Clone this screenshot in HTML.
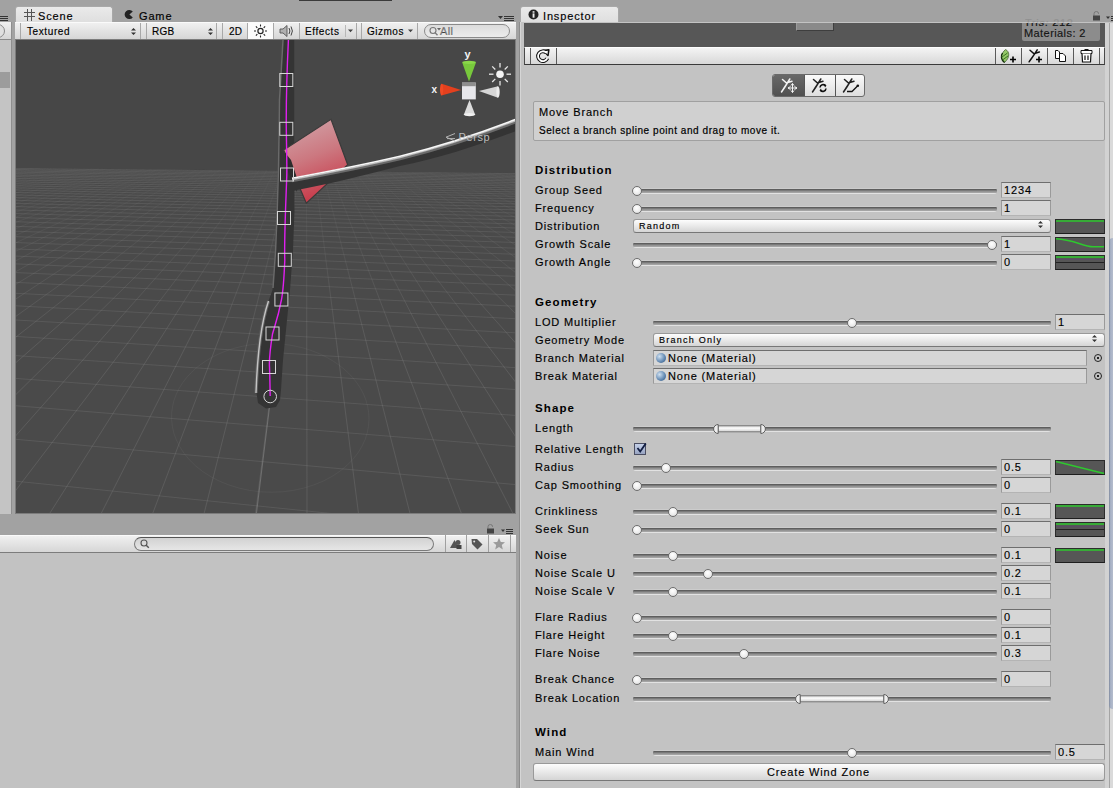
<!DOCTYPE html>
<html><head><meta charset="utf-8"><style>
*{box-sizing:border-box}
html,body{margin:0;padding:0;width:1113px;height:788px;overflow:hidden;background:#a2a2a2;font-family:"Liberation Sans", sans-serif;}
.a{position:absolute}
.t{position:absolute;font-size:11px;line-height:12px;letter-spacing:0.85px;color:#000;white-space:nowrap;-webkit-text-stroke:0.15px #000}
.s{position:absolute;font-size:10px;line-height:12px;letter-spacing:0.55px;color:#000;white-space:nowrap;-webkit-text-stroke:0.15px #000}
.hd{position:absolute;font-size:11.5px;line-height:12px;font-weight:bold;letter-spacing:1.1px;color:#000;white-space:nowrap}
.tb{position:absolute;background:linear-gradient(#f0f0f0,#d6d6d6);border-bottom:1px solid #7c7c7c;border-top:1px solid #fafafa}
.sep{position:absolute;width:1px;background:#a8a8a8}
.track{position:absolute;height:6px;border-radius:3px;background:linear-gradient(#cccccc 0 1px,#5e5e5e 1px 2px,#7a7a7a 2px 3px,#949494 3px 4px,#a4a4a4 4px 5px,#e2e2e2 5px 6px)}
.thumb{position:absolute;width:10px;height:10px;border-radius:50%;background:radial-gradient(circle at 45% 35%,#ffffff,#ededed 55%,#d0d0d0);border:1px solid #6e6e6e}
.vbox{position:absolute;height:16px;background:#d6d6d6;border:1px solid #9a9a9a;border-top-color:#6e6e6e;border-bottom-color:#b4b4b4}
.curve{position:absolute;height:15px;background:#565656;border:1px solid #2c2c2c;border-bottom-color:#1e1e1e}
.dd{position:absolute;border:1px solid #999;border-bottom-color:#777;border-radius:3px;background:linear-gradient(#fdfdfd,#e9e9e9 50%,#d5d5d5)}
</style></head><body>

<div class="a" style="left:0;top:22px;width:11px;height:492px;background:#c4c4c4"></div>
<div class="a" style="left:0;top:22px;width:11px;height:18px;background:linear-gradient(#f0f0f0,#d6d6d6);border-bottom:1px solid #8a8a8a"></div>
<div class="a" style="left:0;top:72px;width:10px;height:16px;background:#9c9c9c"></div>
<div class="a" style="left:-9px;top:24px;width:14px;height:14px;border-radius:7px;border:1px solid #8a8a8a;background:#e0e0e0"></div>
<div class="a" style="left:11px;top:22px;width:1px;height:492px;background:#8e8e8e"></div>
<div class="a" style="left:0;top:16px;width:8px;height:1px;background:#333"></div><div class="a" style="left:0;top:18px;width:8px;height:1px;background:#333"></div><div class="a" style="left:0;top:20px;width:8px;height:1px;background:#333"></div>
<div class="a" style="left:15px;top:6px;width:98px;height:17px;border-radius:3px 3px 0 0;background:linear-gradient(#eaeaea,#dedede);border:1px solid #a8a8a8;border-bottom:none"></div>
<div class="t" style="left:38px;top:10px">Scene</div>
<div class="t" style="left:139px;top:10px">Game</div>
<div class="tb" style="left:15px;top:22px;width:501px;height:18px"></div>
<div class="sep" style="left:20px;top:23px;height:16px"></div>
<div class="sep" style="left:140px;top:23px;height:16px"></div>
<div class="sep" style="left:146px;top:23px;height:16px"></div>
<div class="sep" style="left:216px;top:23px;height:16px"></div>
<div class="sep" style="left:222px;top:23px;height:16px"></div>
<div class="sep" style="left:247px;top:23px;height:16px"></div>
<div class="sep" style="left:273px;top:23px;height:16px"></div>
<div class="sep" style="left:299px;top:23px;height:16px"></div>
<div class="sep" style="left:356px;top:23px;height:16px"></div>
<div class="sep" style="left:361px;top:23px;height:16px"></div>
<div class="sep" style="left:417px;top:23px;height:16px"></div>
<div class="a" style="left:248px;top:23px;width:25px;height:16px;background:#fbfbfb"></div>
<div class="s" style="left:27px;top:26px;letter-spacing:0.6px">Textured</div>
<div class="s" style="left:152px;top:26px;letter-spacing:0.3px">RGB</div>
<div class="s" style="left:229px;top:26px;letter-spacing:0.2px">2D</div>
<div class="s" style="left:305px;top:26px;letter-spacing:0.6px">Effects</div>
<div class="s" style="left:367px;top:26px;letter-spacing:0.5px">Gizmos</div>
<svg class="a" style="left:130px;top:27px" width="7" height="9"><path d="M1 3.5 L3.5 1 L6 3.5 Z M1 5.5 L3.5 8 L6 5.5 Z" fill="#333"/></svg>
<svg class="a" style="left:207px;top:27px" width="7" height="9"><path d="M1 3.5 L3.5 1 L6 3.5 Z M1 5.5 L3.5 8 L6 5.5 Z" fill="#333"/></svg>
<div class="sep" style="left:345px;top:25px;height:12px;background:#b8b8b8"></div>
<svg class="a" style="left:347px;top:29px" width="7" height="5"><path d="M1 0.5 L6 0.5 L3.5 3.2 Z" fill="#444"/></svg>
<svg class="a" style="left:407px;top:29px" width="7" height="5"><path d="M1 0.5 L6 0.5 L3.5 3.2 Z" fill="#444"/></svg>
<svg class="a" style="left:252px;top:23px" width="17" height="16"><circle cx="8.5" cy="8" r="2.6" fill="none" stroke="#222" stroke-width="1.2"/><g stroke="#222" stroke-width="1.1"><line x1="8.5" y1="1.5" x2="8.5" y2="3.5"/><line x1="8.5" y1="12.5" x2="8.5" y2="14.5"/><line x1="2" y1="8" x2="4" y2="8"/><line x1="13" y1="8" x2="15" y2="8"/><line x1="3.9" y1="3.4" x2="5.3" y2="4.8"/><line x1="11.7" y1="11.2" x2="13.1" y2="12.6"/><line x1="3.9" y1="12.6" x2="5.3" y2="11.2"/><line x1="11.7" y1="4.8" x2="13.1" y2="3.4"/></g></svg>
<svg class="a" style="left:278px;top:23px" width="17" height="16"><path d="M2 6 L5 6 L9 2.5 L9 13.5 L5 10 L2 10 Z" fill="#b0b0b0" stroke="#555" stroke-width="0.9"/><path d="M11 5 Q12.8 8 11 11" stroke="#444" stroke-width="1" fill="none"/><path d="M13 3.5 Q15.8 8 13 12.5" stroke="#444" stroke-width="1" fill="none"/></svg>
<div class="a" style="left:424px;top:24px;width:86px;height:14px;border-radius:7px;border:1px solid #8a8a8a;background:linear-gradient(#dcdcdc,#ececec)"></div>
<svg class="a" style="left:428px;top:25px" width="14" height="12"><circle cx="5" cy="5.5" r="3" fill="none" stroke="#777" stroke-width="1.1"/><line x1="7" y1="7.6" x2="9.5" y2="10.3" stroke="#777" stroke-width="1.3"/><path d="M9 3 L13 3 L11 5.5 Z" fill="#666"/></svg>
<div class="s" style="left:440px;top:24.5px;color:#8a8a8a;font-size:11px;letter-spacing:0.4px">All</div>
<svg class="a" style="left:24px;top:9px" width="11" height="12"><g stroke="#555" stroke-width="1"><line x1="3.5" y1="0" x2="3.5" y2="12"/><line x1="7.5" y1="0" x2="7.5" y2="12"/><line x1="0" y1="3.5" x2="11" y2="3.5"/><line x1="0" y1="7.5" x2="11" y2="7.5"/></g></svg>
<svg class="a" style="left:124px;top:9px" width="11" height="11"><path d="M8.8 2.6 A4.6 4.6 0 1 0 8.8 8.4 L5.4 5.5 Z" fill="#222"/></svg>
<svg class="a" style="left:498px;top:15px" width="18" height="7"><path d="M0 1 L5 1 L2.5 4 Z" fill="#333"/><g stroke="#333" stroke-width="1"><line x1="6" y1="1.5" x2="16" y2="1.5"/><line x1="6" y1="3.5" x2="16" y2="3.5"/><line x1="6" y1="5.5" x2="16" y2="5.5"/></g></svg>
<div class="a" style="left:15px;top:40px;width:501px;height:474px;background:#7c7c7c"></div>
<div class="a" style="left:16px;top:40px;width:499px;height:473px;background:#474747;overflow:hidden">
<svg width="501" height="473" style="position:absolute;left:0;top:0"><defs><linearGradient id="gb" gradientUnits="userSpaceOnUse" x1="0" y1="128" x2="0" y2="300"><stop offset="0" stop-color="#8c8c8c" stop-opacity="0.04"/><stop offset="1" stop-color="#8c8c8c" stop-opacity="0.26"/></linearGradient><clipPath id="fl"><polygon points="0,128 501,133 501,473 0,473"/></clipPath><linearGradient id="fg" x1="0" y1="0" x2="0" y2="1"><stop offset="0" stop-color="#9a9a9a" stop-opacity="0.22"/><stop offset="0.25" stop-color="#9a9a9a" stop-opacity="0.30"/><stop offset="1" stop-color="#9a9a9a" stop-opacity="0.38"/></linearGradient></defs><polygon points="0,128 501,133 501,473 0,473" fill="#4a4a4a"/><path clip-path="url(#fl)" d="M-2.0 441.0L330.2 475.0M-2.0 399.1L503.0 444.9M-2.0 365.6L503.0 406.8M-2.0 338.3L503.0 375.7M-2.0 315.5L503.0 349.8M-2.0 296.3L503.0 327.9M-2.0 279.9L503.0 309.2M-2.0 265.7L503.0 293.0M-2.0 253.2L503.0 278.9M-2.0 242.3L503.0 266.4M-2.0 232.5L503.0 255.3M-2.0 223.8L503.0 245.4M-2.0 216.0L503.0 236.5M-2.0 208.9L503.0 228.4M-2.0 202.5L503.0 221.1M-2.0 196.6L503.0 214.4M-2.0 191.2L503.0 208.3M-2.0 186.3L503.0 202.6M-2.0 181.7L503.0 197.4M-2.0 177.5L503.0 192.6M-2.0 173.5L503.0 188.1M-2.0 169.9L503.0 184.0M-2.0 166.5L503.0 180.1M-2.0 163.3L503.0 176.5M-2.0 160.3L503.0 173.1M-2.0 157.5L503.0 169.9M-2.0 154.9L503.0 166.9M-2.0 152.4L503.0 164.0M-2.0 150.0L503.0 161.4M-2.0 147.8L503.0 158.8M-2.0 145.7L503.0 156.4M-2.0 143.7L503.0 154.2M-2.0 141.8L503.0 152.0M-2.0 140.0L503.0 149.9M-2.0 138.3L503.0 148.0M-2.0 136.6L503.0 146.1M-2.0 135.1L503.0 144.3M-2.0 133.6L503.0 142.6M-2.0 132.1L503.0 141.0M-2.0 130.8L503.0 139.5M-2.0 129.5L503.0 138.0M-2.0 128.2L503.0 136.5M-2.0 127.0L503.0 135.2M-2.0 125.8L503.0 133.8M-2.0 124.7L503.0 132.6M-2.0 123.7L503.0 131.4M-2.0 122.6L503.0 130.2M-2.0 121.6L503.0 129.0M-2.0 120.7L503.0 128.0M16.3 120.0L503.0 126.9M80.8 120.0L503.0 125.9M145.2 120.0L503.0 124.9M209.7 120.0L503.0 123.9M274.2 120.0L503.0 123.0M338.6 120.0L503.0 122.1M403.1 120.0L503.0 121.3M467.6 120.0L503.0 120.4" stroke="#8c8c8c" stroke-opacity="0.24" stroke-width="1" fill="none"/><path clip-path="url(#fl)" d="M-2.0 120.4L0.1 120.0M-2.0 121.6L6.7 120.0M-2.0 122.9L13.3 120.0M-2.0 124.2L19.9 120.0M-2.0 125.6L26.5 120.0M-2.0 127.1L33.1 120.0M-2.0 128.6L39.7 120.0M-2.0 130.3L46.3 120.0M-2.0 132.0L52.9 120.0M-2.0 133.8L59.5 120.0M-2.0 135.8L66.1 120.0M-2.0 137.8L72.7 120.0M-2.0 140.0L79.3 120.0M-2.0 142.3L85.9 120.0M-2.0 144.8L92.5 120.0M-2.0 147.5L99.1 120.0M-2.0 150.3L105.7 120.0M-2.0 153.4L112.3 120.0M-2.0 156.6L118.9 120.0M-2.0 160.2L125.5 120.0M-2.0 164.0L132.1 120.0M-2.0 168.2L138.7 120.0M-2.0 172.8L145.3 120.0M-2.0 177.8L151.9 120.0M-2.0 183.2L158.5 120.0M-2.0 189.3L165.1 120.0M-2.0 196.1L171.7 120.0M-2.0 203.6L178.3 120.0M-2.0 212.1L184.9 120.0M-2.0 221.7L191.5 120.0M-2.0 232.7L198.1 120.0M-2.0 245.4L204.7 120.0M-2.0 260.2L211.3 120.0M-2.0 277.7L217.9 120.0M-2.0 298.6L224.5 120.0M-2.0 324.3L231.1 120.0M-2.0 356.4L237.7 120.0M-2.0 397.7L244.3 120.0M-2.0 452.7L250.9 120.0M32.7 475.0L257.5 120.0M84.4 475.0L264.1 120.0M136.1 475.0L270.7 120.0M187.7 475.0L277.3 120.0M239.4 475.0L283.9 120.0M291.0 475.0L290.5 120.0M342.7 475.0L297.1 120.0M394.4 475.0L303.7 120.0M446.0 475.0L310.3 120.0M497.7 475.0L316.9 120.0M503.0 402.1L323.5 120.0M503.0 346.6L330.1 120.0M503.0 306.8L336.7 120.0M503.0 277.0L343.3 120.0M503.0 253.8L349.9 120.0M503.0 235.3L356.5 120.0M503.0 220.1L363.1 120.0M503.0 207.4L369.7 120.0M503.0 196.7L376.3 120.0M503.0 187.5L382.9 120.0M503.0 179.6L389.5 120.0M503.0 172.6L396.1 120.0M503.0 166.5L402.7 120.0M503.0 161.0L409.3 120.0M503.0 156.1L415.9 120.0M503.0 151.7L422.5 120.0M503.0 147.7L429.1 120.0M503.0 144.1L435.7 120.0M503.0 140.8L442.3 120.0M503.0 137.8L448.9 120.0M503.0 135.0L455.5 120.0M503.0 132.4L462.1 120.0M503.0 130.0L468.7 120.0M503.0 127.8L475.3 120.0M503.0 125.7L481.9 120.0M503.0 123.8L488.5 120.0M503.0 122.0L495.1 120.0M503.0 120.3L501.7 120.0" stroke="url(#gb)" stroke-width="1" fill="none"/></svg>
<svg width="501" height="473" style="position:absolute;left:0;top:0"><g transform="translate(-16,-40)">
<defs>
<linearGradient id="pink" x1="0.1" y1="0" x2="0.4" y2="1"><stop offset="0" stop-color="#d2a6ab"/><stop offset="0.5" stop-color="#cc7880"/><stop offset="1" stop-color="#c83848"/></linearGradient>
<linearGradient id="br" x1="0" y1="0" x2="0" y2="1"><stop offset="0" stop-color="#f4f4f4"/><stop offset="0.25" stop-color="#d8d8d8"/><stop offset="0.45" stop-color="#5a5a5a"/><stop offset="1" stop-color="#303030"/></linearGradient>
</defs>
<path d="M365.9 400.0 L363.5 394.0 L360.5 388.3 L356.9 382.9 L352.9 377.8 L348.5 373.1 L343.6 368.7 L338.5 364.7 L333.0 361.0 L327.3 357.6 L321.4 354.6 L315.2 352.0 L308.9 349.7 L302.5 347.8 L295.9 346.3 L289.3 345.0 L282.6 344.2 L275.9 343.7 L269.1 343.5 L262.4 343.7 L255.7 344.2 L249.0 345.0 L242.4 346.3 L235.9 347.8 L229.5 349.7 L223.3 352.0 L217.3 354.6 L211.4 357.6 L205.8 361.0 L200.4 364.7 L195.4 368.7 L190.7 373.1 L186.4 377.8 L182.6 382.9 L179.2 388.3 L176.4 394.0 L174.1 400.0 L172.6 406.2 L171.7 412.7 L171.6 419.3 L172.3 426.1 L173.8 433.0 L176.3 439.8 L179.7 446.6 L184.0 453.3 L189.3 459.7 L195.5 465.8 L202.7 471.5 L210.7 476.6 L219.5 481.2 L229.0 485.0 L239.1 488.1 L249.6 490.4 L260.4 491.8 L271.4 492.2 L282.4 491.8 L293.2 490.4 L303.7 488.1 L313.6 485.0 L323.0 481.2 L331.7 476.6 L339.5 471.5 L346.5 465.8 L352.6 459.7 L357.7 453.3 L361.8 446.6 L365.0 439.8 L367.2 433.0 L368.5 426.1 L369.0 419.3 L368.7 412.7 L367.6 406.2 Z" stroke="#8c8c8c" stroke-opacity="0.12" stroke-width="1" fill="none"/>
<line x1="256.5" y1="513" x2="270.4" y2="400" stroke="#9a9a9a" stroke-opacity="0.45" stroke-width="1"/>
<!-- trunk -->
<path d="M282.5 40 L279 100 L278 165 L276.5 210 L275 250 L272.5 290 L268.5 301 C262.5 319 258 349 256.5 393 L258 403 L266 408.5 L276 407 L280 400 L281 390 L283 360 L286 330 L290 290 L293 250 L294.5 210 L294.2 165 L294.2 40 Z" fill="#343434"/>
<path d="M283 40 L279.5 100 L278.6 165 L277.2 210 L275.6 250 L273 288" stroke="#6a6a6a" stroke-width="1.5" fill="none"/>
<path d="M268.5 301 C262 320 257.5 350 256 393" stroke="#5c5c5c" stroke-width="3.5" fill="none"/><path d="M268.5 301 C262 320 257.5 350 256 393" stroke="#c4c4c4" stroke-width="1.4" fill="none"/>
<!-- pink leaf -->
<path d="M283.7 150 L331 119.3 L347.7 164.7 L306.3 203.3 Z" fill="url(#pink)" stroke="#3a3a3a" stroke-width="1.2"/>
<path d="M284.5 152 L291 160 L297 178 L297 192 L288 172 Z" fill="#2c2c2c"/>
<!-- branch -->
<path d="M292 178 C330 171 370 163 400 156 C440 146 480 133 516 119 L516 131 C480 145 440 158 400 166 C360 176 330 184 292 191 Z" fill="#343434"/>
<path d="M292 181 C330 174 370 166 400 159 C440 149 480 136 516 122" stroke="#6a6a6a" stroke-width="2.5" fill="none"/>
<path d="M292 179.5 C330 172.5 370 164.5 400 157.5 C440 147.5 480 134.5 516 120.5" stroke="#bdbdbd" stroke-width="1.5" fill="none"/>
<path d="M292 178.3 C330 171.3 370 163.3 400 156.3 C440 146.3 480 133.3 516 119.3" stroke="#f8f8f8" stroke-width="1.6" fill="none"/>
<!-- spline -->
<path d="M288.4 40 C287 70 286 100 286.3 129 C286.6 150 287 165 286.8 175 C286 200 284 240 284.8 260 C284 280 283 292 281.4 300 C278 318 274 328 272.5 334 C270 350 269 360 269.5 367 C270 380 270 390 270.2 396" stroke="#e020f0" stroke-width="1.4" fill="none"/>
<g fill="none" stroke="#d6d6d6" stroke-width="1">
<rect x="279.8" y="73.5" width="13" height="13"/>
<rect x="279.8" y="122.3" width="13" height="13"/>
<rect x="280.5" y="168" width="13" height="13"/>
<rect x="277.5" y="211.5" width="13" height="13"/>
<rect x="278.3" y="253.3" width="13" height="13"/>
<rect x="274.9" y="293" width="13" height="13"/>
<rect x="266" y="327" width="13" height="13"/>
<rect x="262.5" y="360.5" width="13" height="13"/>
<circle cx="270.2" cy="396.5" r="6.3"/>
</g>
<!-- gizmo -->
<polygon points="462.2,62.5 476,62.5 469,81.6" fill="#78c83c"/>
<ellipse cx="469.1" cy="62.3" rx="6.9" ry="1.6" fill="#8ad84a"/>
<polygon points="441.5,83.8 441.5,95.5 461.1,90" fill="#e4401e"/>
<ellipse cx="441.6" cy="89.6" rx="1.6" ry="5.9" fill="#f04a24"/>
<polygon points="498,86.3 498,97.8 478.9,91" fill="#d6d6d6"/>
<ellipse cx="498" cy="92" rx="1.7" ry="5.8" fill="#ececec"/>
<polygon points="463.8,114.8 475.2,114.8 469.5,99.9" fill="#dcdcdc"/>
<ellipse cx="469.5" cy="114.6" rx="5.8" ry="1.6" fill="#f0f0f0"/>
<rect x="462" y="82.6" width="13.8" height="16.8" fill="#e6e6ea"/>
<rect x="462" y="82.6" width="13.8" height="3.6" fill="#8e8e8e"/>
<text x="464.5" y="57.5" font-family="Liberation Sans" font-weight="bold" font-size="11" fill="#f4f4f4">y</text>
<text x="431.5" y="93" font-family="Liberation Sans" font-weight="bold" font-size="10" fill="#f4f4f4">x</text>
<circle cx="500" cy="74.2" r="3.8" fill="#f4f4f4"/>
<g stroke="#e8e8e8" stroke-width="1.3">
<line x1="500" y1="63" x2="500" y2="67.5"/><line x1="500" y1="81" x2="500" y2="85.5"/>
<line x1="489" y1="74.2" x2="493.5" y2="74.2"/><line x1="506.5" y1="74.2" x2="511" y2="74.2"/>
<line x1="492.2" y1="66.4" x2="495.3" y2="69.5"/><line x1="504.7" y1="78.9" x2="507.8" y2="82"/>
<line x1="492.2" y1="82" x2="495.3" y2="78.9"/><line x1="504.7" y1="69.5" x2="507.8" y2="66.4"/>
</g>
<!-- persp -->
<path d="M455 133.5 L446 137.2 L455 141 M447 138.6 L455 138.6" stroke="#b4b4b4" stroke-width="1" fill="none"/>
<text x="458.6" y="141" font-family="Liberation Sans" font-size="11" letter-spacing="0.6" fill="#bdbdbd">Persp</text>
</g></svg>
</div>
<div class="tb" style="left:0;top:535px;width:516px;height:18px"></div>
<div class="a" style="left:134px;top:537px;width:300px;height:14px;border-radius:7px;border:1px solid #7a7a7a;border-top-color:#555;background:linear-gradient(#d2d2d2,#e6e6e6)"></div>
<svg class="a" style="left:139px;top:538px" width="12" height="12"><circle cx="5" cy="5" r="3" fill="none" stroke="#555" stroke-width="1.1"/><line x1="7.2" y1="7.2" x2="9.8" y2="9.8" stroke="#555" stroke-width="1.4"/></svg>
<div class="sep" style="left:445px;top:535px;height:17px;background:#a0a0a0"></div>
<div class="sep" style="left:466px;top:535px;height:17px;background:#a0a0a0"></div>
<div class="sep" style="left:488px;top:535px;height:17px;background:#a0a0a0"></div>
<div class="sep" style="left:510px;top:535px;height:17px;background:#a0a0a0"></div>
<svg class="a" style="left:449px;top:537px" width="14" height="14"><path d="M1 11 L5.5 3 L10 11 Z" fill="#555"/><circle cx="9" cy="5.5" r="2.5" fill="#555"/><rect x="7.5" y="8" width="5" height="4" fill="#444"/></svg>
<svg class="a" style="left:470px;top:537px" width="14" height="14"><path d="M1.5 2 L7 2 L12.5 7.5 L7.5 12.5 L2 7 Z" fill="#555"/><circle cx="4.2" cy="4.5" r="1" fill="#e0e0e0"/></svg>
<svg class="a" style="left:492px;top:537px" width="14" height="14"><path d="M7 1 L8.8 5 L13 5.3 L9.8 8 L10.8 12.5 L7 10 L3.2 12.5 L4.2 8 L1 5.3 L5.2 5 Z" fill="#9a9a9a"/></svg>
<div class="a" style="left:0;top:553px;width:516px;height:235px;background:#c2c2c2"></div>
<div class="a" style="left:520px;top:6px;width:99px;height:17px;border-radius:3px 3px 0 0;background:linear-gradient(#eaeaea,#dedede);border:1px solid #a8a8a8;border-bottom:none"></div>
<div class="t" style="left:543px;top:10px">Inspector</div>
<div class="a" style="left:520px;top:22px;width:593px;height:766px;background:#c3c3c3"></div>
<div class="a" style="left:519px;top:22px;width:1px;height:766px;background:#8c8c8c"></div>
<div class="a" style="left:520px;top:22px;width:1px;height:766px;background:#d6d6d6"></div>
<div class="a" style="left:524px;top:23px;width:581px;height:24px;background:#575757"></div>
<div class="a" style="left:524px;top:47px;width:581px;height:18px;background:linear-gradient(#f4f4f4,#d8d8d8);border-top:1px solid #fdfdfd;border-bottom:1px solid #3a3a3a;border-left:1px solid #4a4a4a;border-right:1px solid #4a4a4a"></div>
<div class="sep" style="left:530px;top:48px;height:16px;background:#5a5a5a"></div>
<div class="sep" style="left:556px;top:48px;height:16px;background:#5a5a5a"></div>
<div class="sep" style="left:995px;top:48px;height:16px;background:#5a5a5a"></div>
<div class="sep" style="left:1021px;top:48px;height:16px;background:#5a5a5a"></div>
<div class="sep" style="left:1047px;top:48px;height:16px;background:#5a5a5a"></div>
<div class="sep" style="left:1073px;top:48px;height:16px;background:#5a5a5a"></div>
<div class="sep" style="left:1099px;top:48px;height:16px;background:#5a5a5a"></div>
<svg class="a" style="left:535px;top:48px" width="16" height="16"><path d="M11.3 4.6 A4.9 4.9 0 1 0 12.4 10.2" stroke="#111" stroke-width="3.8" fill="none"/><path d="M8.6 2.6 L13.8 1.8 L13 7.4 Z" fill="#111" stroke="#111" stroke-width="1.6" stroke-linejoin="round"/><path d="M11.3 4.6 A4.9 4.9 0 1 0 12.4 10.2" stroke="#fff" stroke-width="1.8" fill="none"/><path d="M9.6 3.3 L12.9 2.8 L12.4 6.4 Z" fill="#fff"/></svg>
<svg class="a" style="left:998px;top:48px" width="22" height="16"><path d="M7.5 1.5 C11.8 3.5 12.2 9.5 6.5 14.5 C2.8 11.5 2.6 5.5 7.5 1.5 Z" fill="#94c868" stroke="#49663a" stroke-width="0.8"/><path d="M6.5 14.5 C2.8 11.5 2.8 7.5 4.5 5" stroke="#0e2a06" stroke-width="1.3" fill="none"/><path d="M4 9 L9.5 5 M4.5 12 L10 8" stroke="#2e6a16" stroke-width="0.9"/><path d="M12 11.5 L18 11.5 M15 8.5 L15 14.5" stroke="#000" stroke-width="1.6"/></svg>
<svg class="a" style="left:1024px;top:48px" width="22" height="16"><path d="M5.1 13.8 C7 11 9 8.5 10.5 6.2 L6 2.3 M10.5 6.2 L13.2 1.9 M11.3 5.2 L15.4 4" stroke="#111" stroke-width="1.5" fill="none" stroke-linecap="round"/><path d="M12 11.5 L18 11.5 M15 8.5 L15 14.5" stroke="#000" stroke-width="1.6"/></svg>
<svg class="a" style="left:1052px;top:48px" width="18" height="16"><path d="M3.5 2.5 L6 2.5 L7.5 4 L7.5 10.5 L3.5 10.5 Z" fill="#fff" stroke="#111" stroke-width="1"/><path d="M7.5 5.5 L11 5.5 L13.5 8 L13.5 13.5 L7.5 13.5 Z" fill="#fff" stroke="#111" stroke-width="1"/></svg>
<svg class="a" style="left:1078px;top:48px" width="18" height="16"><path d="M3 2.5 L14 2.5 L14 5.5 L3 5.5 Z" fill="#fff" stroke="#111" stroke-width="1"/><path d="M6.5 1.5 L10.5 1.5" stroke="#111" stroke-width="1"/><path d="M4 5.5 L4.5 14 L12.5 14 L13 5.5" fill="#fff" stroke="#111" stroke-width="1.2"/><path d="M7 7.5 L7 12 M10 7.5 L10 12" stroke="#111" stroke-width="1.2"/></svg>
<div class="a" style="left:1022px;top:23px;width:78px;height:18px;background:#8c8c8c;border-radius:0 0 2px 2px;overflow:hidden"><div class="t" style="left:2px;top:-7px;color:#1a1a1a;letter-spacing:0.7px">Tris: 212</div><div class="t" style="left:2px;top:4px;color:#1a1a1a;letter-spacing:0.42px">Materials: 2</div></div>
<div class="t" style="left:1025px;top:17px;color:#1a1a1a;opacity:0.12;letter-spacing:0.7px;height:6px;overflow:hidden">Tris: 212</div>
<div class="a" style="left:796px;top:23px;width:38px;height:8px;background:#8a8a8a;border:1px solid #3e3e3e;border-top:none;border-left-color:#9a9a9a"></div>
<div class="a" style="left:772px;top:74px;width:93px;height:23px;border-radius:3px;border:1px solid #6a6a6a;background:linear-gradient(#fafafa,#dedede);overflow:hidden"><div class="a" style="left:0;top:0;width:31px;height:21px;background:linear-gradient(#686868,#505050)"></div><div class="a" style="left:31px;top:0;width:1px;height:21px;background:#555"></div><div class="a" style="left:62px;top:0;width:1px;height:21px;background:#555"></div></div>
<svg class="a" style="left:778px;top:77px" width="22" height="18"><path d="M3.5 15 C5.5 12 7.5 9 9 6.5 L4.5 2.5 M9 6.5 L11.8 2 M9.8 5.5 L14 4.2" stroke="#f4f4f4" stroke-width="1.5" fill="none" stroke-linecap="round"/><path d="M10 11 L19 11 M14.5 6.5 L14.5 15.5" stroke="#f4f4f4" stroke-width="1"/><path d="M12.5 9.5 L10 11 L12.5 12.5 M16.5 9.5 L19 11 L16.5 12.5 M13 8.5 L14.5 6.5 L16 8.5 M13 13.5 L14.5 15.5 L16 13.5" stroke="#f4f4f4" stroke-width="1" fill="none"/></svg>
<svg class="a" style="left:809px;top:77px" width="22" height="18"><path d="M3.5 15 C5.5 12 7.5 9 9 6.5 L4.5 2.5 M9 6.5 L11.8 2 M9.8 5.5 L14 4.2" stroke="#222" stroke-width="1.5" fill="none" stroke-linecap="round"/><path d="M16.5 8.6 A3.2 3.2 0 0 0 11 10.5 M11.5 13.4 A3.2 3.2 0 0 0 17 11.5" stroke="#111" stroke-width="1.6" fill="none"/><path d="M15 7 L17.5 8.5 L16 10.5 Z M13 15 L10.5 13.5 L12 11.5 Z" fill="#111"/></svg>
<svg class="a" style="left:840px;top:77px" width="22" height="18"><path d="M3.5 15 C5.5 12 7.5 9 9 6.5 L4.5 2.5 M9 6.5 L11.8 2 M9.8 5.5 L14 4.2" stroke="#222" stroke-width="1.5" fill="none" stroke-linecap="round"/><path d="M7 14.5 L12 14.5 L17.5 9" stroke="#111" stroke-width="1.3" fill="none"/><circle cx="17.8" cy="8.8" r="1.3" fill="#111"/></svg>
<svg class="a" style="left:1092px;top:11px" width="9" height="10"><path d="M2 4.5 L2 2.8 A2.3 2.3 0 0 1 6.6 2.8" stroke="#777" stroke-width="1" fill="none"/><rect x="1" y="4.5" width="7" height="5" fill="#444"/></svg>
<svg class="a" style="left:1106px;top:15px" width="12" height="7"><path d="M0 1.5 L4 1.5 L2 4 Z" fill="#333"/><g stroke="#333" stroke-width="1"><line x1="5" y1="1.5" x2="12" y2="1.5"/><line x1="5" y1="3.5" x2="12" y2="3.5"/><line x1="5" y1="5.5" x2="12" y2="5.5"/></g></svg>
<svg class="a" style="left:486px;top:524px" width="9" height="10"><path d="M2 4.5 L2 2.8 A2.3 2.3 0 0 1 6.6 2.8" stroke="#777" stroke-width="1" fill="none"/><rect x="1" y="4.5" width="7" height="5" fill="#444"/></svg>
<svg class="a" style="left:501px;top:528px" width="12" height="7"><path d="M0 1.5 L4 1.5 L2 4 Z" fill="#333"/><g stroke="#333" stroke-width="1"><line x1="5" y1="1.5" x2="12" y2="1.5"/><line x1="5" y1="3.5" x2="12" y2="3.5"/><line x1="5" y1="5.5" x2="12" y2="5.5"/></g></svg>
<div class="a" style="left:299px;top:0;width:93px;height:1px;background:#3a3a3a"></div>
<svg class="a" style="left:528px;top:9px" width="11" height="11"><circle cx="5.5" cy="5.5" r="5" fill="#222"/><rect x="4.6" y="4.4" width="1.9" height="4.3" fill="#eee"/><rect x="4.6" y="2.2" width="1.9" height="1.5" fill="#eee"/></svg>
<div class="a" style="left:533px;top:101px;width:572px;height:40px;background:#d0d0d0;border:1px solid #a0a0a0;border-radius:2px"></div>
<div class="t" style="left:539px;top:106px">Move Branch</div>
<div class="s" style="left:539px;top:125px;letter-spacing:0.56px;-webkit-text-stroke:0.2px #000">Select a branch spline point and drag to move it.</div>
<div class="hd" style="left:535px;top:164px">Distribution</div>
<div class="t" style="left:535px;top:184px">Group Seed</div>
<div class="track" style="left:633px;top:188px;width:364px"></div>
<div class="thumb" style="left:632px;top:186px"></div>
<div class="vbox" style="left:1001px;top:182px;width:50px"></div>
<div class="t" style="left:1004px;top:184px">1234</div>
<div class="t" style="left:535px;top:202px">Frequency</div>
<div class="track" style="left:633px;top:206px;width:364px"></div>
<div class="thumb" style="left:632px;top:204px"></div>
<div class="vbox" style="left:1001px;top:200px;width:50px"></div>
<div class="t" style="left:1004px;top:202px">1</div>
<div class="t" style="left:535px;top:220px">Distribution</div>
<div class="dd" style="left:633px;top:219px;width:418px;height:14px"></div>
<div class="s" style="left:639px;top:220px;font-size:9px;letter-spacing:1.25px">Random</div>
<svg class="a" style="left:1037px;top:220px" width="7" height="9"><path d="M1 3.5 L3.5 1 L6 3.5 Z M1 5.5 L3.5 8 L6 5.5 Z" fill="#333"/></svg>
<div class="curve" style="left:1055px;top:219px;width:50px"></div><svg class="a" style="left:1055px;top:219px" width="50" height="15"><line x1="1" y1="2" x2="49" y2="2" stroke="#2ec82e" stroke-width="1.6"/></svg>
<div class="t" style="left:535px;top:238px">Growth Scale</div>
<div class="track" style="left:633px;top:242px;width:364px"></div>
<div class="thumb" style="left:987px;top:240px"></div>
<div class="vbox" style="left:1001px;top:236px;width:50px"></div>
<div class="t" style="left:1004px;top:238px">1</div>
<div class="curve" style="left:1055px;top:237px;width:50px"></div><svg class="a" style="left:1055px;top:237px" width="50" height="15"><path d="M1 1.8 C8 2.2 16 4 24 6.5 C30 8.5 34 9.8 38 9.8 L49 9.8" stroke="#2ec82e" stroke-width="1.6" fill="none"/></svg>
<div class="t" style="left:535px;top:256px">Growth Angle</div>
<div class="track" style="left:633px;top:260px;width:364px"></div>
<div class="thumb" style="left:632px;top:258px"></div>
<div class="vbox" style="left:1001px;top:254px;width:50px"></div>
<div class="t" style="left:1004px;top:256px">0</div>
<div class="curve" style="left:1055px;top:255px;width:50px"></div><svg class="a" style="left:1055px;top:255px" width="50" height="15"><line x1="1" y1="2" x2="49" y2="2" stroke="#2ec82e" stroke-width="1.6"/><line x1="1" y1="4.5" x2="49" y2="4.5" stroke="#5a4a66" stroke-width="1"/><line x1="1" y1="7.5" x2="49" y2="7.5" stroke="#222" stroke-width="1"/></svg>
<div class="hd" style="left:535px;top:296px">Geometry</div>
<div class="t" style="left:535px;top:316px">LOD Multiplier</div>
<div class="track" style="left:653px;top:320px;width:398px"></div>
<div class="thumb" style="left:847px;top:318px"></div>
<div class="vbox" style="left:1055px;top:314px;width:50px"></div>
<div class="t" style="left:1058px;top:316px">1</div>
<div class="t" style="left:535px;top:334px">Geometry Mode</div>
<div class="dd" style="left:653px;top:333px;width:452px;height:14px"></div>
<div class="s" style="left:659px;top:334px;font-size:9px;letter-spacing:1.25px">Branch Only</div>
<svg class="a" style="left:1091px;top:334px" width="7" height="9"><path d="M1 3.5 L3.5 1 L6 3.5 Z M1 5.5 L3.5 8 L6 5.5 Z" fill="#333"/></svg>
<div class="t" style="left:535px;top:352px">Branch Material</div>
<div class="vbox" style="left:653px;top:350px;width:434px;height:16px"></div>
<div class="a" style="left:656px;top:353px;width:10px;height:10px;border-radius:50%;background:radial-gradient(circle at 35% 35%,#cfe0f0,#5f86b0 60%,#2f4f70)"></div>
<div class="t" style="left:668px;top:352px">None (Material)</div>
<div class="a" style="left:1094px;top:354px;width:8px;height:8px;border-radius:50%;border:1.5px solid #222"></div>
<div class="a" style="left:1097px;top:357px;width:2px;height:2px;background:#222"></div>
<div class="t" style="left:535px;top:370px">Break Material</div>
<div class="vbox" style="left:653px;top:368px;width:434px;height:16px"></div>
<div class="a" style="left:656px;top:371px;width:10px;height:10px;border-radius:50%;background:radial-gradient(circle at 35% 35%,#cfe0f0,#5f86b0 60%,#2f4f70)"></div>
<div class="t" style="left:668px;top:370px">None (Material)</div>
<div class="a" style="left:1094px;top:372px;width:8px;height:8px;border-radius:50%;border:1.5px solid #222"></div>
<div class="a" style="left:1097px;top:375px;width:2px;height:2px;background:#222"></div>
<div class="hd" style="left:535px;top:402px">Shape</div>
<div class="t" style="left:535px;top:422px">Length</div>
<div class="track" style="left:633px;top:426px;width:418px"></div>
<svg class="a" style="left:713px;top:424px" width="53" height="10"><defs><linearGradient id="mm431" x1="0" y1="0" x2="0" y2="1"><stop offset="0" stop-color="#d8d8d8"/><stop offset="0.4" stop-color="#fbfbfb"/><stop offset="1" stop-color="#cfcfcf"/></linearGradient></defs><rect x="5" y="1.8" width="43" height="6" fill="url(#mm431)" stroke="#6a6a6a" stroke-width="0.9"/><path d="M5.2 0.5 A4.6 4.5 0 0 0 5.2 9.5 Z" fill="#eeeeee" stroke="#5e5e5e" stroke-width="1"/><path d="M47.8 0.5 A4.6 4.5 0 0 1 47.8 9.5 Z" fill="#eeeeee" stroke="#5e5e5e" stroke-width="1"/></svg>
<div class="t" style="left:535px;top:443px">Relative Length</div>
<div class="a" style="left:634px;top:443px;width:12px;height:12px;border:1px solid #4a4e62;background:linear-gradient(#c4d0e8,#98a4c2)"></div>
<svg class="a" style="left:634px;top:441px" width="14" height="14"><path d="M3.5 7 L6.2 10.5 L11.8 2.5" stroke="#101c40" stroke-width="1.8" fill="none"/></svg>
<div class="t" style="left:535px;top:461px">Radius</div>
<div class="track" style="left:633px;top:465px;width:364px"></div>
<div class="thumb" style="left:661px;top:463px"></div>
<div class="vbox" style="left:1001px;top:459px;width:50px"></div>
<div class="t" style="left:1004px;top:461px">0.5</div>
<div class="curve" style="left:1055px;top:460px;width:50px"></div><svg class="a" style="left:1055px;top:460px" width="50" height="15"><line x1="1" y1="1.5" x2="49" y2="13.5" stroke="#2ec82e" stroke-width="1.6"/></svg>
<div class="t" style="left:535px;top:479px">Cap Smoothing</div>
<div class="track" style="left:633px;top:483px;width:364px"></div>
<div class="thumb" style="left:632px;top:481px"></div>
<div class="vbox" style="left:1001px;top:477px;width:50px"></div>
<div class="t" style="left:1004px;top:479px">0</div>
<div class="t" style="left:535px;top:505px">Crinkliness</div>
<div class="track" style="left:633px;top:509px;width:364px"></div>
<div class="thumb" style="left:668px;top:507px"></div>
<div class="vbox" style="left:1001px;top:503px;width:50px"></div>
<div class="t" style="left:1004px;top:505px">0.1</div>
<div class="curve" style="left:1055px;top:504px;width:50px"></div><svg class="a" style="left:1055px;top:504px" width="50" height="15"><line x1="1" y1="2" x2="49" y2="2" stroke="#2ec82e" stroke-width="1.6"/></svg>
<div class="t" style="left:535px;top:523px">Seek Sun</div>
<div class="track" style="left:633px;top:527px;width:364px"></div>
<div class="thumb" style="left:632px;top:525px"></div>
<div class="vbox" style="left:1001px;top:521px;width:50px"></div>
<div class="t" style="left:1004px;top:523px">0</div>
<div class="curve" style="left:1055px;top:522px;width:50px"></div><svg class="a" style="left:1055px;top:522px" width="50" height="15"><line x1="1" y1="2" x2="49" y2="2" stroke="#2ec82e" stroke-width="1.6"/><line x1="1" y1="4.5" x2="49" y2="4.5" stroke="#5a4a66" stroke-width="1"/><line x1="1" y1="7.5" x2="49" y2="7.5" stroke="#222" stroke-width="1"/></svg>
<div class="t" style="left:535px;top:549px">Noise</div>
<div class="track" style="left:633px;top:553px;width:364px"></div>
<div class="thumb" style="left:668px;top:551px"></div>
<div class="vbox" style="left:1001px;top:547px;width:50px"></div>
<div class="t" style="left:1004px;top:549px">0.1</div>
<div class="curve" style="left:1055px;top:548px;width:50px"></div><svg class="a" style="left:1055px;top:548px" width="50" height="15"><line x1="1" y1="2" x2="49" y2="2" stroke="#2ec82e" stroke-width="1.6"/></svg>
<div class="t" style="left:535px;top:567px">Noise Scale U</div>
<div class="track" style="left:633px;top:571px;width:364px"></div>
<div class="thumb" style="left:703px;top:569px"></div>
<div class="vbox" style="left:1001px;top:565px;width:50px"></div>
<div class="t" style="left:1004px;top:567px">0.2</div>
<div class="t" style="left:535px;top:585px">Noise Scale V</div>
<div class="track" style="left:633px;top:589px;width:364px"></div>
<div class="thumb" style="left:668px;top:587px"></div>
<div class="vbox" style="left:1001px;top:583px;width:50px"></div>
<div class="t" style="left:1004px;top:585px">0.1</div>
<div class="t" style="left:535px;top:611px">Flare Radius</div>
<div class="track" style="left:633px;top:615px;width:364px"></div>
<div class="thumb" style="left:632px;top:613px"></div>
<div class="vbox" style="left:1001px;top:609px;width:50px"></div>
<div class="t" style="left:1004px;top:611px">0</div>
<div class="t" style="left:535px;top:629px">Flare Height</div>
<div class="track" style="left:633px;top:633px;width:364px"></div>
<div class="thumb" style="left:668px;top:631px"></div>
<div class="vbox" style="left:1001px;top:627px;width:50px"></div>
<div class="t" style="left:1004px;top:629px">0.1</div>
<div class="t" style="left:535px;top:647px">Flare Noise</div>
<div class="track" style="left:633px;top:651px;width:364px"></div>
<div class="thumb" style="left:739px;top:649px"></div>
<div class="vbox" style="left:1001px;top:645px;width:50px"></div>
<div class="t" style="left:1004px;top:647px">0.3</div>
<div class="t" style="left:535px;top:673px">Break Chance</div>
<div class="track" style="left:633px;top:677px;width:364px"></div>
<div class="thumb" style="left:632px;top:675px"></div>
<div class="vbox" style="left:1001px;top:671px;width:50px"></div>
<div class="t" style="left:1004px;top:673px">0</div>
<div class="t" style="left:535px;top:692px">Break Location</div>
<div class="track" style="left:633px;top:696px;width:418px"></div>
<svg class="a" style="left:795px;top:694px" width="94" height="10"><defs><linearGradient id="mm701" x1="0" y1="0" x2="0" y2="1"><stop offset="0" stop-color="#d8d8d8"/><stop offset="0.4" stop-color="#fbfbfb"/><stop offset="1" stop-color="#cfcfcf"/></linearGradient></defs><rect x="5" y="1.8" width="84" height="6" fill="url(#mm701)" stroke="#6a6a6a" stroke-width="0.9"/><path d="M5.2 0.5 A4.6 4.5 0 0 0 5.2 9.5 Z" fill="#eeeeee" stroke="#5e5e5e" stroke-width="1"/><path d="M88.8 0.5 A4.6 4.5 0 0 1 88.8 9.5 Z" fill="#eeeeee" stroke="#5e5e5e" stroke-width="1"/></svg>
<div class="hd" style="left:535px;top:726px">Wind</div>
<div class="t" style="left:535px;top:746px">Main Wind</div>
<div class="track" style="left:653px;top:750px;width:398px"></div>
<div class="thumb" style="left:847px;top:748px"></div>
<div class="vbox" style="left:1055px;top:744px;width:50px"></div>
<div class="t" style="left:1058px;top:746px">0.5</div>
<div class="dd" style="left:533px;top:763px;width:572px;height:18px"></div>
<div class="t" style="left:767px;top:766px">Create Wind Zone</div>
<div class="a" style="left:1105px;top:23px;width:4px;height:765px;background:#d2d2d2"></div>
<div class="a" style="left:1109px;top:23px;width:4px;height:765px;background:#dadada;border-left:1px solid #a4a4a4"></div>
<div class="a" style="left:1109px;top:238px;width:4px;height:471px;background:linear-gradient(90deg,#7e889c,#a8b2c6 40%,#b4bccc);border-radius:4px 0 0 4px"></div>
</body></html>
